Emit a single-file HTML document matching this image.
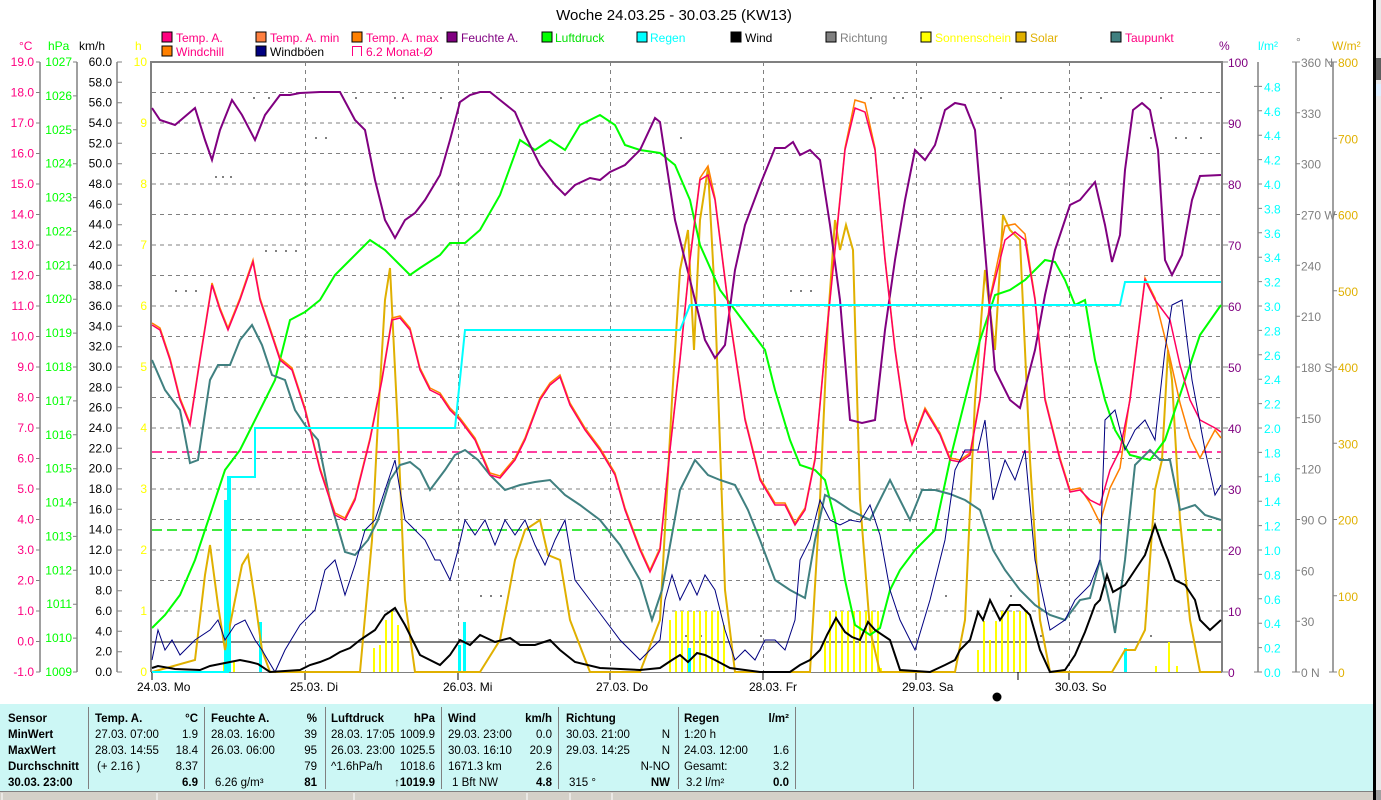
<!DOCTYPE html>
<html><head><meta charset="utf-8">
<style>
html,body{margin:0;padding:0;background:#fff;}
body{width:1381px;height:800px;overflow:hidden;position:relative;font-family:"Liberation Sans",sans-serif;}
svg{position:absolute;left:0;top:0;}
svg text{font-family:"Liberation Sans",sans-serif;}
.b{font-weight:bold;}
</style></head><body>
<svg width="1381" height="800" viewBox="0 0 1381 800" xmlns="http://www.w3.org/2000/svg">
<rect x="0" y="0" width="1381" height="800" fill="#fff"/>
<text x="674" y="20" font-size="15" text-anchor="middle" fill="#000">Woche 24.03.25 - 30.03.25 (KW13)</text>
<g font-size="12">
<rect x="162" y="32" width="10" height="10" fill="#ff0080" stroke="#000"/><text x="176" y="42" fill="#ff0080">Temp. A.</text>
<rect x="256" y="32" width="10" height="10" fill="#ff8040" stroke="#000"/><text x="270" y="42" fill="#ff0080">Temp. A. min</text>
<rect x="352" y="32" width="10" height="10" fill="#ff8000" stroke="#000"/><text x="366" y="42" fill="#ff0080">Temp. A. max</text>
<rect x="447" y="32" width="10" height="10" fill="#800080" stroke="#000"/><text x="461" y="42" fill="#800080">Feuchte A.</text>
<rect x="542" y="32" width="10" height="10" fill="#00ff00" stroke="#000"/><text x="555" y="42" fill="#00e000">Luftdruck</text>
<rect x="637" y="32" width="10" height="10" fill="#00ffff" stroke="#000"/><text x="650" y="42" fill="#00ffff">Regen</text>
<rect x="731" y="32" width="10" height="10" fill="#000" stroke="#000"/><text x="745" y="42" fill="#000">Wind</text>
<rect x="826" y="32" width="10" height="10" fill="#808080" stroke="#000"/><text x="840" y="42" fill="#808080">Richtung</text>
<rect x="921" y="32" width="10" height="10" fill="#ffff00" stroke="#000"/><text x="935" y="42" fill="#ffff00">Sonnenschein</text>
<rect x="1016" y="32" width="10" height="10" fill="#e0b000" stroke="#000"/><text x="1030" y="42" fill="#e0b000">Solar</text>
<rect x="1111" y="32" width="10" height="10" fill="#408080" stroke="#000"/><text x="1125" y="42" fill="#ff0080">Taupunkt</text>
<rect x="162" y="46" width="10" height="10" fill="#ff8000" stroke="#000"/><text x="176" y="56" fill="#ff0080">Windchill</text>
<rect x="256" y="46" width="10" height="10" fill="#000080" stroke="#000"/><text x="270" y="56" fill="#000">Windböen</text>
<path d="M352.5 56 V46.5 H361.5 V56" fill="none" stroke="#ff0080"/><text x="366" y="56" fill="#ff0080">6.2 Monat-Ø</text>
</g>
<g font-size="12">
<text x="19" y="50" fill="#ff0080">°C</text>
<text x="48" y="50" fill="#00ff00">hPa</text>
<text x="79" y="50" fill="#000">km/h</text>
<text x="135" y="50" fill="#ffff00">h</text>
<text x="1219" y="50" fill="#800080">%</text>
<text x="1258" y="50" fill="#00ffff">l/m²</text>
<text x="1296" y="46" fill="#808080">°</text>
<text x="1332" y="50" fill="#e0b000">W/m²</text>
</g>
<g stroke="#808080" stroke-width="1" stroke-dasharray="4,4">
<line x1="152" y1="92.5" x2="1221" y2="92.5"/><line x1="152" y1="123" x2="1221" y2="123"/><line x1="152" y1="153.5" x2="1221" y2="153.5"/><line x1="152" y1="184" x2="1221" y2="184"/><line x1="152" y1="214.5" x2="1221" y2="214.5"/><line x1="152" y1="245" x2="1221" y2="245"/><line x1="152" y1="275.5" x2="1221" y2="275.5"/><line x1="152" y1="306" x2="1221" y2="306"/><line x1="152" y1="336.5" x2="1221" y2="336.5"/><line x1="152" y1="367" x2="1221" y2="367"/><line x1="152" y1="397.5" x2="1221" y2="397.5"/><line x1="152" y1="428" x2="1221" y2="428"/><line x1="152" y1="458.5" x2="1221" y2="458.5"/><line x1="152" y1="489" x2="1221" y2="489"/><line x1="152" y1="519.5" x2="1221" y2="519.5"/><line x1="152" y1="550" x2="1221" y2="550"/><line x1="152" y1="580.5" x2="1221" y2="580.5"/><line x1="152" y1="611" x2="1221" y2="611"/>
<line x1="305.5" y1="62" x2="305.5" y2="672"/><line x1="458.5" y1="62" x2="458.5" y2="672"/><line x1="610.5" y1="62" x2="610.5" y2="672"/><line x1="763.5" y1="62" x2="763.5" y2="672"/><line x1="916.5" y1="62" x2="916.5" y2="672"/><line x1="1069.5" y1="62" x2="1069.5" y2="672"/>
</g>
<line x1="152" y1="642" x2="1221" y2="642" stroke="#808080" stroke-width="2"/>
<path d="M151 672 V62 H1222 V672" fill="none" stroke="#808080" stroke-width="2"/>
<line x1="151" y1="672.5" x2="1222" y2="672.5" stroke="#808080" stroke-width="1"/>
<g stroke="#000"><line x1="152" y1="672" x2="152" y2="680"/><line x1="305" y1="672" x2="305" y2="680"/><line x1="458" y1="672" x2="458" y2="680"/><line x1="610" y1="672" x2="610" y2="680"/><line x1="763" y1="672" x2="763" y2="680"/><line x1="916" y1="672" x2="916" y2="680"/><line x1="1069" y1="672" x2="1069" y2="680"/><line x1="1018" y1="672" x2="1018" y2="680"/></g>
<g font-size="12" fill="#000">
<text x="137" y="691">24.03.  Mo</text><text x="290" y="691">25.03.  Di</text><text x="443" y="691">26.03.  Mi</text><text x="596" y="691">27.03.  Do</text><text x="749" y="691">28.03.  Fr</text><text x="902" y="691">29.03.  Sa</text><text x="1055" y="691">30.03.  So</text>
</g>
<circle cx="997" cy="697" r="4.5" fill="#000"/>
<g stroke="#808080" stroke-width="1.5"><line x1="40" y1="62" x2="40" y2="672"/><line x1="77" y1="62" x2="77" y2="672"/><line x1="117" y1="62" x2="117" y2="672"/></g>
<g stroke="#808080">
<path d="M36 62h4M36 92.5h4M36 123h4M36 153.5h4M36 184h4M36 214.5h4M36 245h4M36 275.5h4M36 306h4M36 336.5h4M36 367h4M36 397.5h4M36 428h4M36 458.5h4M36 489h4M36 519.5h4M36 550h4M36 580.5h4M36 611h4M36 641.5h4M36 672h4"/>
<path d="M73 62h4M73 95.9h4M73 129.8h4M73 163.7h4M73 197.6h4M73 231.4h4M73 265.3h4M73 299.2h4M73 333.1h4M73 367h4M73 400.9h4M73 434.8h4M73 468.7h4M73 502.6h4M73 536.4h4M73 570.3h4M73 604.2h4M73 638.1h4M73 672h4"/>
<path d="M117 62h5M117 82.3h5M117 102.7h5M117 123h5M117 143.3h5M117 163.7h5M117 184h5M117 204.3h5M117 224.7h5M117 245h5M117 265.3h5M117 285.7h5M117 306h5M117 326.3h5M117 346.7h5M117 367h5M117 387.3h5M117 407.7h5M117 428h5M117 448.3h5M117 468.7h5M117 489h5M117 509.3h5M117 529.7h5M117 550h5M117 570.3h5M117 590.7h5M117 611h5M117 631.3h5M117 651.7h5M117 672h5"/>
</g>
<g font-size="12" fill="#ff0080" text-anchor="end">
<text x="34" y="66">19.0</text><text x="34" y="96.5">18.0</text><text x="34" y="127">17.0</text><text x="34" y="157.5">16.0</text><text x="34" y="188">15.0</text><text x="34" y="218.5">14.0</text><text x="34" y="249">13.0</text><text x="34" y="279.5">12.0</text><text x="34" y="310">11.0</text><text x="34" y="340.5">10.0</text><text x="34" y="371">9.0</text><text x="34" y="401.5">8.0</text><text x="34" y="432">7.0</text><text x="34" y="462.5">6.0</text><text x="34" y="493">5.0</text><text x="34" y="523.5">4.0</text><text x="34" y="554">3.0</text><text x="34" y="584.5">2.0</text><text x="34" y="615">1.0</text><text x="34" y="645.5">0.0</text><text x="34" y="676">-1.0</text>
</g>
<g font-size="12" fill="#00ff00" text-anchor="end">
<text x="72" y="66">1027</text><text x="72" y="99.9">1026</text><text x="72" y="133.8">1025</text><text x="72" y="167.7">1024</text><text x="72" y="201.6">1023</text><text x="72" y="235.4">1022</text><text x="72" y="269.3">1021</text><text x="72" y="303.2">1020</text><text x="72" y="337.1">1019</text><text x="72" y="371">1018</text><text x="72" y="404.9">1017</text><text x="72" y="438.8">1016</text><text x="72" y="472.7">1015</text><text x="72" y="506.6">1014</text><text x="72" y="540.4">1013</text><text x="72" y="574.3">1012</text><text x="72" y="608.2">1011</text><text x="72" y="642.1">1010</text><text x="72" y="676">1009</text>
</g>
<g font-size="12" fill="#000" text-anchor="end">
<text x="112" y="66">60.0</text><text x="112" y="86.3">58.0</text><text x="112" y="106.7">56.0</text><text x="112" y="127">54.0</text><text x="112" y="147.3">52.0</text><text x="112" y="167.7">50.0</text><text x="112" y="188">48.0</text><text x="112" y="208.3">46.0</text><text x="112" y="228.7">44.0</text><text x="112" y="249">42.0</text><text x="112" y="269.3">40.0</text><text x="112" y="289.7">38.0</text><text x="112" y="310">36.0</text><text x="112" y="330.3">34.0</text><text x="112" y="350.7">32.0</text><text x="112" y="371">30.0</text><text x="112" y="391.3">28.0</text><text x="112" y="411.7">26.0</text><text x="112" y="432">24.0</text><text x="112" y="452.3">22.0</text><text x="112" y="472.7">20.0</text><text x="112" y="493">18.0</text><text x="112" y="513.3">16.0</text><text x="112" y="533.7">14.0</text><text x="112" y="554">12.0</text><text x="112" y="574.3">10.0</text><text x="112" y="594.7">8.0</text><text x="112" y="615">6.0</text><text x="112" y="635.3">4.0</text><text x="112" y="655.7">2.0</text><text x="112" y="676">0.0</text>
</g>
<g font-size="12" fill="#ffff00" text-anchor="end">
<text x="147" y="66">10</text><text x="147" y="127">9</text><text x="147" y="188">8</text><text x="147" y="249">7</text><text x="147" y="310">6</text><text x="147" y="371">5</text><text x="147" y="432">4</text><text x="147" y="493">3</text><text x="147" y="554">2</text><text x="147" y="615">1</text><text x="147" y="676">0</text>
</g>
<g stroke="#808080" stroke-width="1.5"><line x1="1258" y1="62" x2="1258" y2="672"/><line x1="1296" y1="62" x2="1296" y2="672"/><line x1="1333" y1="62" x2="1333" y2="672"/></g>
<g stroke="#808080">
<path d="M1222 62h6M1222 123h6M1222 184h6M1222 245h6M1222 306h6M1222 367h6M1222 428h6M1222 489h6M1222 550h6M1222 611h6M1222 672h6"/>
<path d="M1254 672h8M1258 647.6h4M1258 623.2h4M1258 598.8h4M1258 574.4h4M1258 550h4M1258 525.6h4M1258 501.2h4M1258 476.8h4M1258 452.4h4M1258 428h4M1258 403.6h4M1258 379.2h4M1258 354.8h4M1258 330.4h4M1258 306h4M1258 281.6h4M1258 257.2h4M1258 232.8h4M1258 208.4h4M1258 184h4M1258 159.6h4M1258 135.2h4M1258 110.8h4M1254 86.4h8"/>
<path d="M1292 62h8M1296 112.8h4M1296 163.7h4M1296 214.5h4M1296 265.3h4M1296 316.2h4M1296 367h4M1296 417.8h4M1296 468.7h4M1296 519.5h4M1296 570.3h4M1296 621.2h4M1292 672h8"/>
<path d="M1329 62h8M1333 138.3h4M1333 214.5h4M1333 290.8h4M1333 367h4M1333 443.3h4M1333 519.5h4M1333 595.8h4M1329 672h8"/>
</g>
<g font-size="12" fill="#800080">
<text x="1228" y="67">100</text><text x="1228" y="128">90</text><text x="1228" y="189">80</text><text x="1228" y="250">70</text><text x="1228" y="311">60</text><text x="1228" y="372">50</text><text x="1228" y="433">40</text><text x="1228" y="494">30</text><text x="1228" y="555">20</text><text x="1228" y="616">10</text><text x="1228" y="677">0</text>
</g>
<g font-size="12" fill="#00ffff">
<text x="1264" y="677">0.0</text><text x="1264" y="652.6">0.2</text><text x="1264" y="628.2">0.4</text><text x="1264" y="603.8">0.6</text><text x="1264" y="579.4">0.8</text><text x="1264" y="555">1.0</text><text x="1264" y="530.6">1.2</text><text x="1264" y="506.2">1.4</text><text x="1264" y="481.8">1.6</text><text x="1264" y="457.4">1.8</text><text x="1264" y="433">2.0</text><text x="1264" y="408.6">2.2</text><text x="1264" y="384.2">2.4</text><text x="1264" y="359.8">2.6</text><text x="1264" y="335.4">2.8</text><text x="1264" y="311">3.0</text><text x="1264" y="286.6">3.2</text><text x="1264" y="262.2">3.4</text><text x="1264" y="237.8">3.6</text><text x="1264" y="213.4">3.8</text><text x="1264" y="189">4.0</text><text x="1264" y="164.6">4.2</text><text x="1264" y="140.2">4.4</text><text x="1264" y="115.8">4.6</text><text x="1264" y="91.4">4.8</text>
</g>
<g font-size="12" fill="#808080">
<text x="1301" y="67">360 N</text><text x="1301" y="117.8">330</text><text x="1301" y="168.7">300</text><text x="1301" y="219.5">270 W</text><text x="1301" y="270.3">240</text><text x="1301" y="321.2">210</text><text x="1301" y="372">180 S</text><text x="1301" y="422.8">150</text><text x="1301" y="473.7">120</text><text x="1301" y="524.5">90  O</text><text x="1301" y="575.3">60</text><text x="1301" y="626.2">30</text><text x="1301" y="677">0   N</text>
</g>
<g font-size="12" fill="#e0b000">
<text x="1338" y="67">800</text><text x="1338" y="143.3">700</text><text x="1338" y="219.5">600</text><text x="1338" y="295.8">500</text><text x="1338" y="372">400</text><text x="1338" y="448.3">300</text><text x="1338" y="524.5">200</text><text x="1338" y="600.8">100</text><text x="1338" y="677">0</text>
</g>
<g fill="#808080">
<rect x="253" y="97" width="2" height="2"/><rect x="268" y="97" width="2" height="2"/><rect x="355" y="97" width="2" height="2"/><rect x="394" y="97" width="2" height="2"/><rect x="402" y="97" width="2" height="2"/><rect x="440" y="97" width="2" height="2"/><rect x="870" y="97" width="2" height="2"/><rect x="893" y="97" width="2" height="2"/><rect x="902" y="97" width="2" height="2"/><rect x="920" y="97" width="2" height="2"/><rect x="1000" y="97" width="2" height="2"/><rect x="1160" y="97" width="2" height="2"/><rect x="1080" y="97" width="2" height="2"/><rect x="1100" y="97" width="2" height="2"/>
<rect x="215" y="176" width="2" height="2"/><rect x="222" y="176" width="2" height="2"/><rect x="230" y="176" width="2" height="2"/><rect x="265" y="250" width="2" height="2"/><rect x="275" y="250" width="2" height="2"/><rect x="285" y="250" width="2" height="2"/><rect x="295" y="250" width="2" height="2"/><rect x="175" y="290" width="2" height="2"/><rect x="185" y="290" width="2" height="2"/><rect x="195" y="290" width="2" height="2"/><rect x="790" y="290" width="2" height="2"/><rect x="800" y="290" width="2" height="2"/><rect x="810" y="290" width="2" height="2"/><rect x="1150" y="137" width="2" height="2"/><rect x="1175" y="137" width="2" height="2"/><rect x="1185" y="137" width="2" height="2"/><rect x="1200" y="137" width="2" height="2"/><rect x="680" y="137" width="2" height="2"/><rect x="315" y="137" width="2" height="2"/><rect x="325" y="137" width="2" height="2"/>
<rect x="480" y="595" width="2" height="2"/><rect x="490" y="595" width="2" height="2"/><rect x="500" y="595" width="2" height="2"/><rect x="685" y="635" width="2" height="2"/><rect x="700" y="635" width="2" height="2"/><rect x="760" y="635" width="2" height="2"/><rect x="945" y="595" width="2" height="2"/><rect x="1010" y="595" width="2" height="2"/><rect x="1040" y="635" width="2" height="2"/><rect x="1150" y="635" width="2" height="2"/>
</g>
<g fill="#ffff00">
<rect x="373" y="648" width="2" height="24"/><rect x="379" y="645" width="2" height="27"/><rect x="385" y="620" width="2" height="52"/><rect x="391" y="611" width="2" height="61"/><rect x="397" y="625" width="2" height="47"/>
<rect x="223" y="662" width="2" height="10"/><rect x="233" y="662" width="2" height="10"/>
<rect x="669" y="620" width="2" height="52"/><rect x="675" y="611" width="2" height="61"/><rect x="681" y="611" width="2" height="61"/><rect x="687" y="611" width="2" height="61"/><rect x="693" y="611" width="2" height="61"/><rect x="699" y="611" width="2" height="61"/><rect x="705" y="611" width="2" height="61"/><rect x="711" y="611" width="2" height="61"/><rect x="717" y="611" width="2" height="61"/><rect x="723" y="625" width="2" height="47"/>
<rect x="824" y="640" width="2" height="32"/><rect x="829" y="611" width="2" height="61"/><rect x="835" y="611" width="2" height="61"/><rect x="841" y="611" width="2" height="61"/><rect x="847" y="611" width="2" height="61"/><rect x="853" y="611" width="2" height="61"/><rect x="859" y="611" width="2" height="61"/><rect x="865" y="611" width="2" height="61"/><rect x="871" y="611" width="2" height="61"/><rect x="877" y="611" width="2" height="61"/><rect x="880" y="668" width="2" height="4"/>
<rect x="977" y="650" width="2" height="22"/><rect x="983" y="621" width="2" height="51"/><rect x="989" y="640" width="2" height="32"/><rect x="995" y="621" width="2" height="51"/><rect x="1001" y="611" width="2" height="61"/><rect x="1007" y="611" width="2" height="61"/><rect x="1013" y="611" width="2" height="61"/><rect x="1019" y="611" width="2" height="61"/><rect x="1025" y="611" width="2" height="61"/>
<rect x="1155" y="666" width="2" height="6"/><rect x="1168" y="642" width="2" height="30"/><rect x="1176" y="666" width="2" height="6"/>
</g>
<line x1="152" y1="452" x2="1221" y2="452" stroke="#ff0080" stroke-width="1.5" stroke-dasharray="10,5"/>
<line x1="152" y1="530" x2="1221" y2="530" stroke="#00e000" stroke-width="1.5" stroke-dasharray="10,5"/>
<g fill="#00ffff">
<rect x="224" y="500" width="3" height="172"/><rect x="228" y="477" width="3" height="195"/><rect x="259" y="622" width="3" height="50"/><rect x="458" y="645" width="3" height="27"/><rect x="463" y="622" width="3" height="50"/><rect x="688" y="648" width="3" height="24"/><rect x="1124" y="648" width="3" height="24"/>
</g>
<polyline fill="none" stroke="#e0b000" stroke-width="2" points="152,672 195,660 205,575 210,545 218,605 225,650 235,600 242,565 248,555 255,600 262,650 270,672 360,672 372,540 378,420 385,300 390,268 398,430 405,600 415,672 480,672 500,640 515,560 525,530 540,520 548,555 560,560 570,620 590,672 640,672 660,620 672,400 680,270 688,230 694,350 700,220 708,168 715,300 725,590 735,672 810,672 820,500 828,320 835,220 840,250 846,225 853,250 860,500 870,630 880,672 955,672 965,620 975,400 985,270 995,350 1003,215 1010,230 1020,240 1030,460 1040,620 1050,672 1112,672 1125,650 1135,650 1145,630 1150,560 1155,490 1162,460 1168,350 1172,380 1180,520 1190,620 1200,672 1221,672"/>
<polyline fill="none" stroke="#00ff00" stroke-width="2" points="152,628 165,615 180,595 195,560 210,515 225,470 240,450 250,430 260,410 275,380 290,320 305,312 320,300 335,275 350,260 370,240 385,250 400,265 410,275 420,268 440,255 450,243 465,243 480,230 500,195 520,140 535,150 550,140 565,150 580,125 600,115 615,125 625,145 640,150 660,153 675,165 690,200 700,245 720,290 735,310 750,330 765,350 775,390 790,440 800,465 815,470 825,480 835,520 845,580 855,625 870,635 880,628 890,590 900,570 915,550 935,530 950,460 965,400 980,340 995,295 1010,290 1025,280 1035,270 1045,260 1055,262 1065,280 1075,305 1085,300 1095,360 1105,400 1115,430 1130,455 1150,460 1165,440 1185,380 1200,335 1221,305"/>
<polyline fill="none" stroke="#408080" stroke-width="2" points="152,360 165,390 180,410 190,463 198,460 210,380 218,365 230,365 240,340 252,325 262,345 272,375 285,380 295,410 305,425 318,440 330,500 345,552 355,555 368,540 378,520 390,480 400,465 410,462 420,470 430,490 445,470 455,455 465,450 478,460 490,475 505,490 520,485 535,482 550,480 565,495 580,505 600,520 620,545 640,580 652,620 662,590 680,490 695,460 708,475 720,480 735,485 748,510 760,540 775,580 790,590 805,598 815,540 825,495 835,500 850,510 870,520 890,480 910,520 922,490 935,490 950,494 965,500 980,510 993,550 1005,570 1020,590 1035,605 1050,615 1065,620 1080,600 1090,598 1100,560 1110,605 1115,633 1125,560 1135,465 1150,450 1160,460 1170,460 1180,510 1195,505 1205,515 1221,520"/>
<polyline fill="none" stroke="#800080" stroke-width="2" points="152,108 160,120 175,125 195,108 205,140 212,160 220,130 232,100 242,115 255,140 265,115 280,95 290,95 300,93 320,92 340,92 355,120 365,130 375,180 385,220 395,238 405,220 415,213 425,200 440,175 450,140 460,102 470,95 480,92 490,92 500,100 515,112 525,135 540,165 555,185 565,195 575,185 590,178 600,180 610,172 625,165 640,150 655,118 660,122 665,155 675,220 685,260 695,300 705,340 715,358 725,345 735,270 745,225 760,185 775,148 785,148 793,142 800,155 810,150 820,160 830,225 840,300 850,420 862,423 875,420 885,330 895,260 905,200 915,150 925,160 935,145 945,110 955,103 965,105 975,130 985,250 995,370 1010,400 1020,408 1035,350 1045,295 1055,250 1070,205 1080,200 1095,182 1105,225 1112,262 1120,235 1125,170 1133,110 1142,103 1150,110 1158,150 1165,260 1172,275 1182,255 1192,200 1200,176 1221,175"/>
<polyline fill="none" stroke="#ff8000" stroke-width="1.5" transform="translate(0,-2)" points="152,325 160,330 170,360 180,400 190,425 200,360 212,285 220,310 228,330 240,300 253,262 260,300 270,330 280,360 292,370 305,410 320,470 335,515 345,520 355,500 370,440 382,380 392,320 400,318 410,330 420,370 430,390 440,395 450,410 460,420 475,440 490,475 500,478 515,460 525,440 540,400 550,385 560,377 570,405 585,430 600,450 615,475 625,510 640,550 650,572 660,550 670,450 680,360 690,260 700,180 708,168 715,200 730,320 745,420 760,480 775,505 785,505 795,525 805,510 815,460 825,350 835,250 845,150 855,102 865,105 875,150 885,260 895,350 905,420 912,445 925,410 940,435 950,460 960,462 970,455 980,400 990,300 1005,228 1015,226 1025,236 1035,300 1045,400 1060,460 1070,492 1080,490 1090,505 1100,525 1110,490 1120,470 1130,400 1145,280 1155,300 1170,360 1180,405 1190,440 1200,460 1215,432 1221,440"/>
<polyline fill="none" stroke="#ff0060" stroke-width="1.5" points="152,325 160,330 170,360 180,400 190,425 200,360 212,285 220,310 228,330 240,300 253,262 260,300 270,330 280,360 292,370 305,410 320,470 335,515 345,520 355,500 370,440 382,380 392,320 400,318 410,330 420,370 430,390 440,395 450,410 460,420 475,440 490,475 500,478 515,460 525,440 540,400 550,385 560,377 570,405 585,430 600,450 615,475 625,510 640,550 650,572 660,550 670,450 680,360 690,260 700,180 708,175 715,200 730,320 745,420 760,480 775,505 785,505 795,525 805,510 815,460 825,350 835,250 845,150 855,108 865,112 875,150 885,260 895,350 905,420 912,445 925,410 940,435 950,460 960,462 970,455 980,400 990,300 1005,240 1015,232 1025,240 1035,300 1045,400 1060,460 1070,492 1080,490 1090,500 1100,505 1110,470 1120,450 1130,400 1145,280 1155,300 1170,320 1180,365 1190,400 1200,420 1215,428 1221,432"/>
<polyline fill="none" stroke="#00ffff" stroke-width="2" points="152,672 228,672 228,477 255,477 255,428 455,428 465,330 680,330 690,305 1120,305 1125,282 1221,282"/>
<polyline fill="none" stroke="#000080" stroke-width="1" points="152,660 158,630 165,650 172,640 180,655 195,640 210,630 218,620 225,640 235,625 245,620 255,640 262,650 275,672 285,650 300,625 315,610 325,570 335,560 345,595 355,565 365,530 375,520 385,490 395,460 405,520 415,530 425,540 435,560 440,560 450,580 458,550 465,520 475,535 485,520 495,545 505,520 515,535 525,520 535,545 545,565 555,540 565,520 575,580 590,600 605,620 620,640 640,660 660,640 665,600 672,575 680,600 690,580 697,595 705,575 715,590 725,630 735,660 745,650 755,660 765,640 775,640 785,650 795,620 800,560 810,540 820,500 830,520 840,525 850,520 860,522 870,505 880,535 890,590 900,620 915,650 930,600 945,540 955,470 965,450 978,450 985,420 993,500 1005,460 1015,480 1025,450 1035,560 1050,630 1065,620 1075,600 1090,585 1100,560 1105,420 1115,410 1125,450 1135,430 1145,420 1155,440 1165,350 1172,305 1182,300 1192,380 1205,450 1215,495 1221,485"/>
<polyline fill="none" stroke="#000" stroke-width="2" points="152,668 158,666 175,669 200,670 210,666 220,664 240,660 250,662 258,664 270,672 300,670 310,665 320,662 330,658 340,652 350,648 360,640 375,630 385,615 395,608 405,625 420,655 440,665 450,655 460,640 470,645 480,635 495,642 510,638 520,645 535,645 550,640 560,650 575,662 600,668 640,670 660,668 672,660 680,655 688,662 697,653 705,655 715,660 730,668 760,672 790,672 800,665 810,660 820,650 827,635 836,618 845,632 852,637 860,640 868,622 875,630 890,640 900,670 930,672 945,665 955,660 960,650 970,640 978,612 983,620 990,600 1000,620 1010,605 1020,605 1030,615 1040,650 1050,672 1065,670 1075,655 1085,632 1095,605 1100,600 1107,575 1113,592 1125,585 1135,570 1145,555 1155,525 1162,545 1168,560 1175,580 1185,585 1195,600 1200,620 1210,630 1221,620"/>
<rect x="0" y="704" width="1373" height="87" fill="#ccf7f5"/>
<g stroke="#808080"><line x1="88.5" y1="707" x2="88.5" y2="789"/><line x1="204.5" y1="707" x2="204.5" y2="789"/><line x1="325.5" y1="707" x2="325.5" y2="789"/><line x1="441.5" y1="707" x2="441.5" y2="789"/><line x1="558.5" y1="707" x2="558.5" y2="789"/><line x1="678.5" y1="707" x2="678.5" y2="789"/><line x1="795.5" y1="707" x2="795.5" y2="789"/><line x1="913.5" y1="707" x2="913.5" y2="789"/></g>
<rect x="0" y="791" width="1373" height="9" fill="#d4d0c8"/>
<line x1="0" y1="791.5" x2="1373" y2="791.5" stroke="#808080"/>
<g stroke="#fff"><line x1="2" y1="793" x2="2" y2="800"/><line x1="157" y1="793" x2="157" y2="800"/><line x1="354" y1="793" x2="354" y2="800"/><line x1="527" y1="793" x2="527" y2="800"/><line x1="570" y1="793" x2="570" y2="800"/><line x1="612" y1="793" x2="612" y2="800"/></g>
<g font-size="11.5" fill="#000">
<text x="8" y="722" class="b">Sensor</text><text x="8" y="738" class="b">MinWert</text><text x="8" y="754" class="b">MaxWert</text><text x="8" y="770" class="b">Durchschnitt</text><text x="8" y="786" class="b">30.03. 23:00</text>
<text x="95" y="722" class="b">Temp. A.</text><text x="198" y="722" text-anchor="end" class="b">°C</text>
<text x="95" y="738">27.03. 07:00</text><text x="198" y="738" text-anchor="end">1.9</text>
<text x="95" y="754">28.03. 14:55</text><text x="198" y="754" text-anchor="end">18.4</text>
<text x="97" y="770">(+ 2.16 )</text><text x="198" y="770" text-anchor="end">8.37</text>
<text x="198" y="786" text-anchor="end" class="b">6.9</text>
<text x="211" y="722" class="b">Feuchte A.</text><text x="317" y="722" text-anchor="end" class="b">%</text>
<text x="211" y="738">28.03. 16:00</text><text x="317" y="738" text-anchor="end">39</text>
<text x="211" y="754">26.03. 06:00</text><text x="317" y="754" text-anchor="end">95</text>
<text x="317" y="770" text-anchor="end">79</text>
<text x="215" y="786">6.26 g/m³</text><text x="317" y="786" text-anchor="end" class="b">81</text>
<text x="331" y="722" class="b">Luftdruck</text><text x="435" y="722" text-anchor="end" class="b">hPa</text>
<text x="331" y="738">28.03. 17:05</text><text x="435" y="738" text-anchor="end">1009.9</text>
<text x="331" y="754">26.03. 23:00</text><text x="435" y="754" text-anchor="end">1025.5</text>
<text x="331" y="770">^1.6hPa/h</text><text x="435" y="770" text-anchor="end">1018.6</text>
<text x="435" y="786" text-anchor="end" class="b">↑1019.9</text>
<text x="448" y="722" class="b">Wind</text><text x="552" y="722" text-anchor="end" class="b">km/h</text>
<text x="448" y="738">29.03. 23:00</text><text x="552" y="738" text-anchor="end">0.0</text>
<text x="448" y="754">30.03. 16:10</text><text x="552" y="754" text-anchor="end">20.9</text>
<text x="448" y="770">1671.3 km</text><text x="552" y="770" text-anchor="end">2.6</text>
<text x="452" y="786">1 Bft NW</text><text x="552" y="786" text-anchor="end" class="b">4.8</text>
<text x="566" y="722" class="b">Richtung</text>
<text x="566" y="738">30.03. 21:00</text><text x="670" y="738" text-anchor="end">N</text>
<text x="566" y="754">29.03. 14:25</text><text x="670" y="754" text-anchor="end">N</text>
<text x="670" y="770" text-anchor="end">N-NO</text>
<text x="569" y="786">315 °</text><text x="670" y="786" text-anchor="end" class="b">NW</text>
<text x="684" y="722" class="b">Regen</text><text x="789" y="722" text-anchor="end" class="b">l/m²</text>
<text x="684" y="738">1:20 h</text>
<text x="684" y="754">24.03. 12:00</text><text x="789" y="754" text-anchor="end">1.6</text>
<text x="684" y="770">Gesamt:</text><text x="789" y="770" text-anchor="end">3.2</text>
<text x="686" y="786">3.2 l/m²</text><text x="789" y="786" text-anchor="end" class="b">0.0</text>
</g>
<rect x="1373" y="0" width="8" height="800" fill="#000"/>
<rect x="1376" y="0" width="5" height="800" fill="#e8e8e8"/>
<rect x="1376" y="58" width="5" height="22" fill="#606060"/>
<rect x="1376" y="84" width="5" height="12" fill="#ddeeff"/>
<rect x="1376" y="790" width="5" height="10" fill="#a0a0a0"/>
</svg>
</body></html>
